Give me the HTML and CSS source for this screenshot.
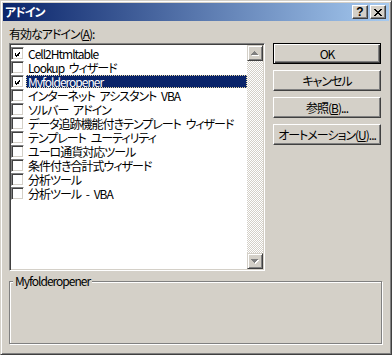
FILE: index.html
```html
<!DOCTYPE html>
<html lang="ja">
<head>
  <meta charset="UTF-8" />
  <title>アドイン</title>
  <link rel="stylesheet" href="styles.css">
</head>
<body>
  <div class="window">
    <!-- Title bar -->
    <div class="titlebar">
      <span class="title">アドイン</span>
      <div class="caption-buttons">
        <button class="cap-btn help">?</button>
        <button class="cap-btn close">
          <svg width="8" height="7" viewBox="0 0 8 7" shape-rendering="crispEdges">
            <path d="M0 0h2v1h-2zM6 0h2v1h-2zM1 1h2v1h-2zM5 1h2v1h-2zM2 2h4v1h-4zM3 3h2v1h-2zM2 4h4v1h-4zM1 5h2v1h-2zM5 5h2v1h-2zM0 6h2v1h-2zM6 6h2v1h-2z" fill="#000"/>
          </svg>
        </button>
      </div>
    </div>

    <div class="content">
      <div class="main">
        <!-- Add-in list -->
        <div class="left">
          <div class="list-label">有効なアドイン(<u>A</u>):</div>
          <div class="listbox">
            <ul class="items">
              <li class="item"><span class="check"><svg width="7" height="7" viewBox="0 0 7 7" shape-rendering="crispEdges"><path d="M0 2h1v3h-1zM1 3h1v3h-1zM2 4h1v3h-1zM3 3h1v3h-1zM4 2h1v3h-1zM5 1h1v3h-1zM6 0h1v3h-1z" fill="#000"/></svg></span><span class="text">Cell2Htmltable</span></li>
              <li class="item"><span class="check"></span><span class="text">Lookup ウィザード</span></li>
              <li class="item selected"><span class="check"><svg width="7" height="7" viewBox="0 0 7 7" shape-rendering="crispEdges"><path d="M0 2h1v3h-1zM1 3h1v3h-1zM2 4h1v3h-1zM3 3h1v3h-1zM4 2h1v3h-1zM5 1h1v3h-1zM6 0h1v3h-1z" fill="#000"/></svg></span><span class="text">Myfolderopener</span></li>
              <li class="item"><span class="check"></span><span class="text">インターネット アシスタント VBA</span></li>
              <li class="item"><span class="check"></span><span class="text">ソルバー アドイン</span></li>
              <li class="item"><span class="check"></span><span class="text">データ追跡機能付きテンプレート ウィザード</span></li>
              <li class="item"><span class="check"></span><span class="text">テンプレート ユーティリティ</span></li>
              <li class="item"><span class="check"></span><span class="text">ユーロ通貨対応ツール</span></li>
              <li class="item"><span class="check"></span><span class="text">条件付き合計式ウィザード</span></li>
              <li class="item"><span class="check"></span><span class="text">分析ツール</span></li>
              <li class="item"><span class="check"></span><span class="text">分析ツール - VBA</span></li>
            </ul>
            <div class="scrollbar">
              <div class="sb-btn">
                <svg width="8" height="5" viewBox="0 0 8 5" shape-rendering="crispEdges">
                  <path d="M4 1h1v1h-1zM3 2h3v1h-3zM2 3h5v1h-5zM1 4h7v1h-7z" fill="#fff"/>
                  <path d="M3 0h1v1h-1zM2 1h3v1h-3zM1 2h5v1h-5zM0 3h7v1h-7z" fill="#808080"/>
                </svg>
              </div>
              <div class="sb-track"></div>
              <div class="sb-btn">
                <svg width="8" height="5" viewBox="0 0 8 5" shape-rendering="crispEdges">
                  <path d="M1 1h7v1h-7zM2 2h5v1h-5zM3 3h3v1h-3zM4 4h1v1h-1z" fill="#fff"/>
                  <path d="M0 0h7v1h-7zM1 1h5v1h-5zM2 2h3v1h-3zM3 3h1v1h-1z" fill="#808080"/>
                </svg>
              </div>
            </div>
          </div>
        </div>

        <!-- Dialog buttons -->
        <div class="buttons">
          <button class="btn default">OK</button>
          <button class="btn">キャンセル</button>
          <button class="btn">参照(<u>B</u>)...</button>
          <button class="btn">オートメーション(<u>U</u>)...</button>
        </div>
      </div>

      <!-- Description of selected add-in -->
      <fieldset class="desc">
        <legend>Myfolderopener</legend>
      </fieldset>
    </div>
  </div>
</body>
</html>
```

FILE: styles.css
```css
* {
  box-sizing: border-box;
}

body {
  margin: 0;
  background: #d4d0c8;
  font-family: "Noto Sans CJK JP", "Liberation Sans", sans-serif;
  font-size: 12px;
  font-feature-settings: "palt";
  letter-spacing: -1px;
  word-spacing: 3px;
  color: #000;
}

.window {
  width: 392px;
  height: 355px;
  background: #d4d0c8;
  border: 1px solid;
  border-color: #d4d0c8 #404040 #404040 #d4d0c8;
  box-shadow: inset 1px 1px #fff, inset -1px -1px #808080;
  padding: 2px;
  display: flex;
  flex-direction: column;
}

.titlebar {
  height: 18px;
  background: linear-gradient(to right, #0a246a, #a6caf0);
  display: flex;
  align-items: center;
  justify-content: space-between;
  padding: 0 3px 0 2px;
}

.title {
  color: #fff;
  font-weight: bold;
  line-height: 14px;
}

.caption-buttons {
  display: flex;
  gap: 2px;
}

.cap-btn {
  width: 16px;
  height: 14px;
  padding: 0;
  background: #d4d0c8;
  border: 1px solid;
  border-color: #fff #404040 #404040 #fff;
  box-shadow: inset -1px -1px #808080;
  display: flex;
  align-items: center;
  justify-content: center;
}

.cap-btn.help {
  font-family: "Liberation Sans", sans-serif;
  font-weight: bold;
  font-size: 12px;
  line-height: 11px;
  letter-spacing: 0;
}

.content {
  flex: 1;
  padding: 6px 0 0 6px;
}

.main {
  display: flex;
}

.left {
  width: 256px;
}

.list-label {
  line-height: 14px;
  margin-bottom: 2px;
}

.listbox {
  height: 228px;
  background: #fff;
  border: 1px solid;
  border-color: #808080 #fff #fff #808080;
  box-shadow: inset 1px 1px #404040, inset -1px -1px #d4d0c8;
  padding: 1px;
  display: flex;
}

.items {
  list-style: none;
  margin: 0;
  padding: 1px 0 0;
  flex: 1;
}

.item {
  display: flex;
  align-items: center;
  height: 14px;
}

.check {
  width: 13px;
  height: 13px;
  flex: none;
  background: #fff;
  border: 1px solid;
  border-color: #808080 #fff #fff #808080;
  box-shadow: inset 1px 1px #404040, inset -1px -1px #d4d0c8;
  padding: 2px;
  display: flex;
}

.check svg {
  margin: 1px;
}

.text {
  flex: 1;
  margin-left: 2px;
  padding-left: 2px;
  line-height: 13px;
  height: 13px;
  white-space: nowrap;
}

.selected .text {
  background: #0a246a;
  color: #fff;
  outline: 1px dotted #e8d8a0;
  outline-offset: -1px;
}

.scrollbar {
  width: 16px;
  display: flex;
  flex-direction: column;
}

.sb-btn {
  height: 16px;
  background: #d4d0c8;
  border: 1px solid;
  border-color: #d4d0c8 #404040 #404040 #d4d0c8;
  box-shadow: inset 1px 1px #fff, inset -1px -1px #808080;
  display: flex;
  align-items: center;
  justify-content: center;
}

.sb-track {
  flex: 1;
  background: repeating-conic-gradient(#d4d0c8 0 25%, #fff 0 50%) 0 0 / 2px 2px;
}

.buttons {
  width: 108px;
  margin-left: 8px;
  padding-top: 16px;
  display: flex;
  flex-direction: column;
  gap: 6px;
}

.btn {
  height: 21px;
  padding: 0;
  background: #d4d0c8;
  border: 1px solid;
  border-color: #fff #404040 #404040 #fff;
  box-shadow: inset -1px -1px #808080;
  font: inherit;
  letter-spacing: inherit;
  color: #000;
  line-height: 13px;
  white-space: nowrap;
}

.btn.default {
  border-color: #000;
  box-shadow: inset 1px 1px #fff, inset -1px -1px #404040, inset -2px -2px #808080;
}

.desc {
  width: 373px;
  height: 69px;
  margin: 4px 0 0 0;
  padding: 0;
  border: 1px solid #808080;
  box-shadow: inset 1px 1px #fff, 1px 1px #fff;
}

.desc legend {
  margin-left: 3px;
  padding: 0 2px;
  line-height: 12px;
  background: #d4d0c8;
}
```
